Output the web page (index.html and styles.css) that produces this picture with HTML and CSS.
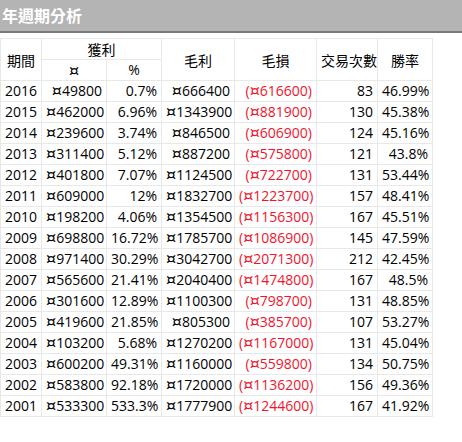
FILE: index.html
```html
<!DOCTYPE html>
<html lang="zh-Hant">
<head>
<meta charset="utf-8">
<link rel="stylesheet" href="styles.css">
</head>
<body>
<div class="titlebar">年週期分析</div>
<table class="grid">
  <colgroup>
    <col class="c1"><col class="c2"><col class="c3"><col class="c4"><col class="c5"><col class="c6"><col class="c7">
  </colgroup>
  <thead>
    <tr><th rowspan="2">期間</th><th colspan="2">獲利</th><th rowspan="2">毛利</th><th rowspan="2">毛損</th><th rowspan="2">交易次數</th><th rowspan="2">勝率</th></tr>
    <tr><th><span class="cur">¤</span></th><th class="pct">%</th></tr>
  </thead>
  <tbody>
    <tr><td class="l">2016</td><td><span class="cur">¤</span>49800</td><td>0.7%</td><td><span class="cur">¤</span>666400</td><td class="neg">(<span class="cur">¤</span>616600)</td><td>83</td><td>46.99%</td></tr>
    <tr><td class="l">2015</td><td><span class="cur">¤</span>462000</td><td>6.96%</td><td><span class="cur">¤</span>1343900</td><td class="neg">(<span class="cur">¤</span>881900)</td><td>130</td><td>45.38%</td></tr>
    <tr><td class="l">2014</td><td><span class="cur">¤</span>239600</td><td>3.74%</td><td><span class="cur">¤</span>846500</td><td class="neg">(<span class="cur">¤</span>606900)</td><td>124</td><td>45.16%</td></tr>
    <tr><td class="l">2013</td><td><span class="cur">¤</span>311400</td><td>5.12%</td><td><span class="cur">¤</span>887200</td><td class="neg">(<span class="cur">¤</span>575800)</td><td>121</td><td>43.8%</td></tr>
    <tr><td class="l">2012</td><td><span class="cur">¤</span>401800</td><td>7.07%</td><td><span class="cur">¤</span>1124500</td><td class="neg">(<span class="cur">¤</span>722700)</td><td>131</td><td>53.44%</td></tr>
    <tr><td class="l">2011</td><td><span class="cur">¤</span>609000</td><td>12%</td><td><span class="cur">¤</span>1832700</td><td class="neg">(<span class="cur">¤</span>1223700)</td><td>157</td><td>48.41%</td></tr>
    <tr><td class="l">2010</td><td><span class="cur">¤</span>198200</td><td>4.06%</td><td><span class="cur">¤</span>1354500</td><td class="neg">(<span class="cur">¤</span>1156300)</td><td>167</td><td>45.51%</td></tr>
    <tr><td class="l">2009</td><td><span class="cur">¤</span>698800</td><td>16.72%</td><td><span class="cur">¤</span>1785700</td><td class="neg">(<span class="cur">¤</span>1086900)</td><td>145</td><td>47.59%</td></tr>
    <tr><td class="l">2008</td><td><span class="cur">¤</span>971400</td><td>30.29%</td><td><span class="cur">¤</span>3042700</td><td class="neg">(<span class="cur">¤</span>2071300)</td><td>212</td><td>42.45%</td></tr>
    <tr><td class="l">2007</td><td><span class="cur">¤</span>565600</td><td>21.41%</td><td><span class="cur">¤</span>2040400</td><td class="neg">(<span class="cur">¤</span>1474800)</td><td>167</td><td>48.5%</td></tr>
    <tr><td class="l">2006</td><td><span class="cur">¤</span>301600</td><td>12.89%</td><td><span class="cur">¤</span>1100300</td><td class="neg">(<span class="cur">¤</span>798700)</td><td>131</td><td>48.85%</td></tr>
    <tr><td class="l">2005</td><td><span class="cur">¤</span>419600</td><td>21.85%</td><td><span class="cur">¤</span>805300</td><td class="neg">(<span class="cur">¤</span>385700)</td><td>107</td><td>53.27%</td></tr>
    <tr><td class="l">2004</td><td><span class="cur">¤</span>103200</td><td>5.68%</td><td><span class="cur">¤</span>1270200</td><td class="neg">(<span class="cur">¤</span>1167000)</td><td>131</td><td>45.04%</td></tr>
    <tr><td class="l">2003</td><td><span class="cur">¤</span>600200</td><td>49.31%</td><td><span class="cur">¤</span>1160000</td><td class="neg">(<span class="cur">¤</span>559800)</td><td>134</td><td>50.75%</td></tr>
    <tr><td class="l">2002</td><td><span class="cur">¤</span>583800</td><td>92.18%</td><td><span class="cur">¤</span>1720000</td><td class="neg">(<span class="cur">¤</span>1136200)</td><td>156</td><td>49.36%</td></tr>
    <tr><td class="l">2001</td><td><span class="cur">¤</span>533300</td><td>533.3%</td><td><span class="cur">¤</span>1777900</td><td class="neg">(<span class="cur">¤</span>1244600)</td><td>167</td><td>41.92%</td></tr>
  </tbody>
</table>
</body>
</html>
```
FILE: styles.css
```css
html, body {
  margin: 0;
  padding: 0;
  background: #ffffff;
}
body {
  font-family: "Open Sans", "Noto Sans CJK TC", sans-serif;
  font-size: 14px;
  color: #000;
}
.titlebar {
  height: 31px;
  line-height: 31px;
  background: #b4b4b4;
  border-bottom: 2px solid #7a7a7a;
  color: #ffffff;
  font-family: "Noto Sans CJK TC", sans-serif;
  font-size: 16px;
  font-weight: 700;
  padding-left: 2px;
}
.grid {
  margin-top: 5px;
  border-collapse: collapse;
  table-layout: fixed;
  width: 433px;
}
.c1 { width: 41px; }
.c2 { width: 65px; }
.c3 { width: 55px; }
.c4 { width: 73px; }
.c5 { width: 82px; }
.c6 { width: 61px; }
.c7 { width: 55px; }
.grid th, .grid td {
  border: 1px solid #e8e8e8;
  height: 20px;
  line-height: 20px;
  padding: 0 4px;
  white-space: nowrap;
  overflow: hidden;
}
.grid th {
  font-weight: normal;
  text-align: center;
  font-family: "Noto Sans CJK TC", sans-serif;
}
.grid th.pct {
  font-family: "Open Sans", sans-serif;
}
.grid td {
  text-align: right;
}
.grid td.l {
  text-align: left;
}
.grid td.neg {
  color: #f2142c;
}
.cur {
  font-family: "DejaVu Sans", sans-serif;
  font-size: 16px;
  line-height: 1;
}
```
